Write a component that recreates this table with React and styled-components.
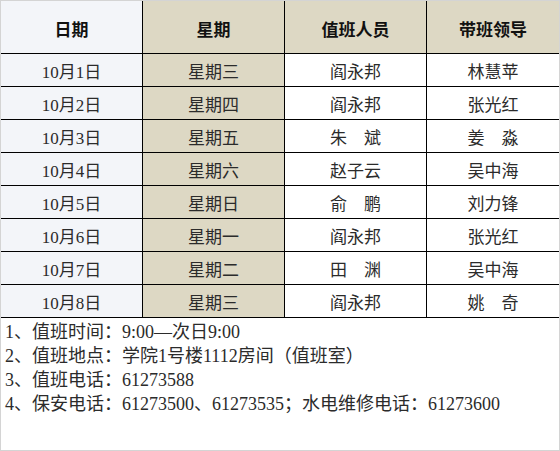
import React from "react";
import styled, { createGlobalStyle } from "styled-components";

const Global = createGlobalStyle`
  html, body { margin: 0; padding: 0; background: #ffffff; }
  * { box-sizing: border-box; }
`;

const Page = styled.div`
  width: 560px;
  height: 451px;
  border: 1px solid #d4d4d4;
  background: #ffffff;
  font-family: "Liberation Serif", "Noto Sans CJK SC", serif;
  color: #2b2b2b;
  overflow: hidden;
`;

const Table = styled.div`
  display: grid;
  grid-template-columns: 142px 142px 142px 133px;
  grid-template-rows: 53px repeat(8, 33px);
  margin-right: -1px;
`;

const Cell = styled.div`
  display: flex;
  align-items: center;
  justify-content: center;
  border-right: 1px solid #000;
  border-bottom: 1px solid #000;
  font-size: 17px;
  background: ${(p) => (p.$tone === "blue" ? "#f3f5f9" : p.$tone === "beige" ? "#ddd8c4" : "#ffffff")};
  white-space: pre;
`;

const HeadCell = styled(Cell)`
  font-weight: 700;
  font-size: 17px;
  color: #111;
  padding-top: 2px;
`;

const Notes = styled.div`
  padding: 2px 0 0 4px;
  font-size: 18px;
  line-height: 24px;
  color: #2b2b2b;
`;

const Line = styled.div`
  white-space: pre;
`;

const headers = ["日期", "星期", "值班人员", "带班领导"];
const headerTones = ["blue", "beige", "beige", "beige"];

const rows = [
  ["10月1日", "星期三", "阎永邦", "林慧苹"],
  ["10月2日", "星期四", "阎永邦", "张光红"],
  ["10月3日", "星期五", "朱　斌", "姜　淼"],
  ["10月4日", "星期六", "赵子云", "吴中海"],
  ["10月5日", "星期日", "俞　鹏", "刘力锋"],
  ["10月6日", "星期一", "阎永邦", "张光红"],
  ["10月7日", "星期二", "田　渊", "吴中海"],
  ["10月8日", "星期三", "阎永邦", "姚　奇"],
];
const bodyTones = ["blue", "beige", "white", "white"];

const notes = [
  "1、值班时间：9:00—次日9:00",
  "2、值班地点：学院1号楼1112房间（值班室）",
  "3、值班电话：61273588",
  "4、保安电话：61273500、61273535；水电维修电话：61273600",
];

export default function App() {
  return (
    <>
      <Global />
      <Page>
        <Table>
          {headers.map((h, i) => (
            <HeadCell key={h} $tone={headerTones[i]}>
              {h}
            </HeadCell>
          ))}
          {rows.map((r, ri) =>
            r.map((c, ci) => (
              <Cell key={ri + "-" + ci} $tone={bodyTones[ci]}>
                {c}
              </Cell>
            ))
          )}
        </Table>
        <Notes>
          {notes.map((n) => (
            <Line key={n}>{n}</Line>
          ))}
        </Notes>
      </Page>
    </>
  );
}
